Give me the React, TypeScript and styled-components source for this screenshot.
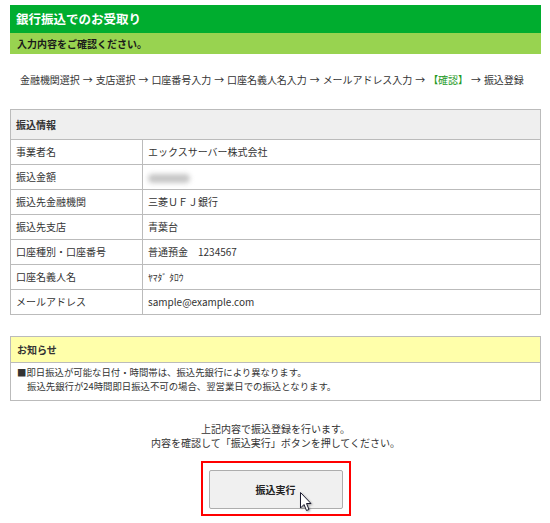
import React from "react";
import styled, { createGlobalStyle } from "styled-components";

const Global = createGlobalStyle`
  html, body { margin: 0; padding: 0; background: #fff; }
  body { font-family: "Noto Sans CJK JP", "Noto Sans", sans-serif; color: #333; font-size: 10px; }
`;

const Page = styled.div`
  width: 550px;
  padding: 5px 9px 0 10px;
  box-sizing: border-box;
`;

const TitleBar = styled.div`
  background: #00ad2f;
  color: #fff;
  font-weight: bold;
  font-size: 12.5px;
  height: 28px;
  line-height: 28px;
  padding-left: 6px;
`;

const SubBar = styled.div`
  background: #98d350;
  color: #1a1a1a;
  font-weight: bold;
  font-size: 10px;
  height: 21px;
  line-height: 21px;
  padding-left: 7px;
`;

const Steps = styled.div`
  margin: 19px 0 0 10px;
  font-size: 10px;
  height: 14px;
  line-height: 14px;
  white-space: nowrap;
  letter-spacing: -0.05px;
`;

const Arrow = styled.span`
  margin: 0 3px;
`;

const Current = styled.span`
  color: #1f9a1f;
`;

const Table = styled.table`
  margin-top: 22px;
  width: 100%;
  border-collapse: collapse;
  border: 1px solid #bbb;
  font-size: 10px;
  line-height: 14px;
`;

const HeadCell = styled.th`
  background: #efefef;
  text-align: left;
  font-weight: bold;
  height: 29px;
  padding: 0 5px;
  border-bottom: 1px solid #bbb;
`;

const LabelCell = styled.td`
  width: 121px;
  height: 24px;
  padding: 0 5px;
  border: 1px solid #bbb;
  border-left: none;
`;

const ValueCell = styled.td`
  height: 24px;
  padding: 0 5px;
  border: 1px solid #bbb;
  border-right: none;
`;

const Kana = styled.span`
  font-size: 9.5px;
`;

const Blur = styled.span`
  display: inline-block;
  width: 42px;
  height: 9px;
  border-radius: 5px;
  background: #c6c6c6;
  filter: blur(2.5px);
  vertical-align: middle;
`;

const Notice = styled.div`
  margin-top: 21px;
  border: 1px solid #bbb;
`;

const NoticeHead = styled.div`
  background: #ffffaa;
  font-weight: bold;
  font-size: 10px;
  height: 25px;
  line-height: 25px;
  padding: 0 6px;
  border-bottom: 1px solid #bbb;
`;

const NoticeBody = styled.div`
  padding: 2px 6px 7px;
  line-height: 14px;
  font-size: 9.4px;
`;

const Indent = styled.div`
  padding-left: 10px;
`;

const Guide = styled.div`
  margin-top: 21px;
  text-align: center;
  line-height: 14px;
  font-size: 10px;
`;

const ButtonWrap = styled.div`
  display: flex;
  justify-content: center;
  margin-top: 11px;
`;

const RedFrame = styled.div`
  position: relative;
  border: 2px solid #ff0000;
  padding: 7px 6px 5px 6px;
`;

const SubmitButton = styled.button`
  width: 134px;
  height: 39px;
  background: #f0f0f0;
  border: 1px solid #adadad;
  border-radius: 2px;
  font-family: "Noto Sans CJK JP", sans-serif;
  font-weight: bold;
  font-size: 10px;
  color: #222;
  display: block;
  padding: 0;
`;

const Cursor = styled.svg`
  position: absolute;
  left: 96px;
  top: 28px;
  filter: drop-shadow(1px 1px 1px rgba(0, 0, 0, 0.35));
`;

const steps = ["金融機関選択", "支店選択", "口座番号入力", "口座名義人名入力", "メールアドレス入力"];

const rows: [string, React.ReactNode][] = [
  ["事業者名", "エックスサーバー株式会社"],
  ["振込金額", <Blur />],
  ["振込先金融機関", "三菱ＵＦＪ銀行"],
  ["振込先支店", "青葉台"],
  ["口座種別・口座番号", "普通預金　1234567"],
  ["口座名義人名", <Kana>ﾔﾏﾀﾞ ﾀﾛｳ</Kana>],
  ["メールアドレス", "sample@example.com"],
];

export default function App() {
  return (
    <>
      <Global />
      <Page>
        <TitleBar>銀行振込でのお受取り</TitleBar>
        <SubBar>入力内容をご確認ください。</SubBar>
        <Steps>
          {steps.map((s) => (
            <React.Fragment key={s}>
              {s}
              <Arrow>→</Arrow>
            </React.Fragment>
          ))}
          <Current>【確認】</Current>
          <Arrow>→</Arrow>振込登録
        </Steps>
        <Table>
          <thead>
            <tr>
              <HeadCell colSpan={2}>振込情報</HeadCell>
            </tr>
          </thead>
          <tbody>
            {rows.map(([k, v]) => (
              <tr key={k}>
                <LabelCell>{k}</LabelCell>
                <ValueCell>{v}</ValueCell>
              </tr>
            ))}
          </tbody>
        </Table>
        <Notice>
          <NoticeHead>お知らせ</NoticeHead>
          <NoticeBody>
            <div>■即日振込が可能な日付・時間帯は、振込先銀行により異なります。</div>
            <Indent>振込先銀行が24時間即日振込不可の場合、翌営業日での振込となります。</Indent>
          </NoticeBody>
        </Notice>
        <Guide>
          上記内容で振込登録を行います。
          <br />
          内容を確認して「振込実行」ボタンを押してください。
        </Guide>
        <ButtonWrap>
          <RedFrame>
            <SubmitButton>振込実行</SubmitButton>
            <Cursor width="14" height="22" viewBox="0 0 14 22">
              <path
                d="M1.5 1.5 L1.5 17 L5 13.5 L7.5 19.5 L10 18.5 L7.5 12.5 L12 12.5 Z"
                fill="#fff"
                stroke="#1a1a2e"
                strokeWidth="1"
                strokeLinejoin="miter"
              />
            </Cursor>
          </RedFrame>
        </ButtonWrap>
      </Page>
    </>
  );
}
